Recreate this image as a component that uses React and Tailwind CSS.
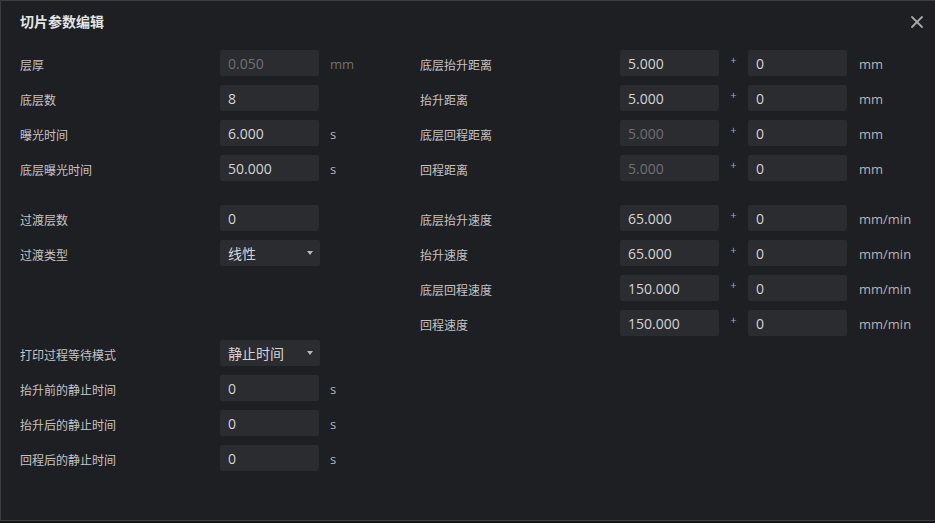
import { X } from "lucide-react";

const font = { fontFamily: '"Open Sans", "Noto Sans CJK SC", sans-serif' };

const Field = ({ value, disabled }) => (
  <div
    className={`w-[99px] h-[26px] rounded-[2px] bg-[#2b2c2f] flex items-center pl-2 text-[14px] ${
      disabled ? "text-[#6f7073]" : "text-[#d4d4d4]"
    }`}
  >
    {value}
  </div>
);

const Select = ({ value }) => (
  <div className="w-[100px] h-[26px] rounded-[2px] bg-[#2b2c2f] flex items-center justify-between pl-2 pr-[7px] text-[14px] text-[#d4d4d4]">
    <span>{value}</span>
    <span className="w-0 h-0 border-l-[3.5px] border-r-[3.5px] border-t-[4px] border-l-transparent border-r-transparent border-t-[#b8b8b8]" />
  </div>
);

const Label = ({ children }) => (
  <div className="w-[200px] text-[12px] text-[#c4c4c4] pt-[5px]">{children}</div>
);

const LeftRow = ({ label, value, unit, disabled, select, className = "" }) => (
  <div className={`flex items-center h-[26px] ${className}`}>
    <Label>{label}</Label>
    {select ? <Select value={value} /> : <Field value={value} disabled={disabled} />}
    {unit && (
      <span className={`ml-[11px] pt-[4px] text-[13px] ${disabled ? "text-[#6f7073]" : "text-[#b4b4b4]"}`}>
        {unit}
      </span>
    )}
  </div>
);

const RightRow = ({ label, value, unit, disabled, className = "" }) => (
  <div className={`flex items-center h-[26px] ${className}`}>
    <Label>{label}</Label>
    <Field value={value} disabled={disabled} />
    <span className="w-[29px] text-center text-[11px] text-[#a8a8a8] -mt-[6px]">+</span>
    <Field value="0" />
    <span className="ml-[12px] pt-[4px] text-[13px] text-[#b4b4b4]">{unit}</span>
  </div>
);

export default function App() {
  return (
    <div className="w-[935px] h-[523px] bg-[#151617] overflow-hidden" style={font}>
      <div className="h-[521px] bg-[#1e1f22] border-t border-l border-b border-[#3c3d40]">
        <div className="flex items-center justify-between h-[40px] pl-[19px] pr-[8px] pt-[1px]">
          <span className="text-[14px] font-bold text-[#e4e4e4]">切片参数编辑</span>
          <X size={20} strokeWidth={2.2} className="text-[#a6a6a6]" />
        </div>

        <div className="flex pl-[19px] pt-[9px]">
          {/* left column */}
          <div className="w-[400px] flex flex-col">
            <LeftRow label="层厚" value="0.050" unit="mm" disabled />
            <LeftRow label="底层数" value="8" className="mt-[9px]" />
            <LeftRow label="曝光时间" value="6.000" unit="s" className="mt-[9px]" />
            <LeftRow label="底层曝光时间" value="50.000" unit="s" className="mt-[9px]" />

            <LeftRow label="过渡层数" value="0" className="mt-[24px]" />
            <LeftRow label="过渡类型" value="线性" select className="mt-[9px]" />

            <LeftRow label="打印过程等待模式" value="静止时间" select className="mt-[74px]" />
            <LeftRow label="抬升前的静止时间" value="0" unit="s" className="mt-[9px]" />
            <LeftRow label="抬升后的静止时间" value="0" unit="s" className="mt-[9px]" />
            <LeftRow label="回程后的静止时间" value="0" unit="s" className="mt-[9px]" />
          </div>

          {/* right column */}
          <div className="flex flex-col">
            <RightRow label="底层抬升距离" value="5.000" unit="mm" />
            <RightRow label="抬升距离" value="5.000" unit="mm" className="mt-[9px]" />
            <RightRow label="底层回程距离" value="5.000" unit="mm" disabled className="mt-[9px]" />
            <RightRow label="回程距离" value="5.000" unit="mm" disabled className="mt-[9px]" />

            <RightRow label="底层抬升速度" value="65.000" unit="mm/min" className="mt-[24px]" />
            <RightRow label="抬升速度" value="65.000" unit="mm/min" className="mt-[9px]" />
            <RightRow label="底层回程速度" value="150.000" unit="mm/min" className="mt-[9px]" />
            <RightRow label="回程速度" value="150.000" unit="mm/min" className="mt-[9px]" />
          </div>
        </div>
      </div>
    </div>
  );
}
